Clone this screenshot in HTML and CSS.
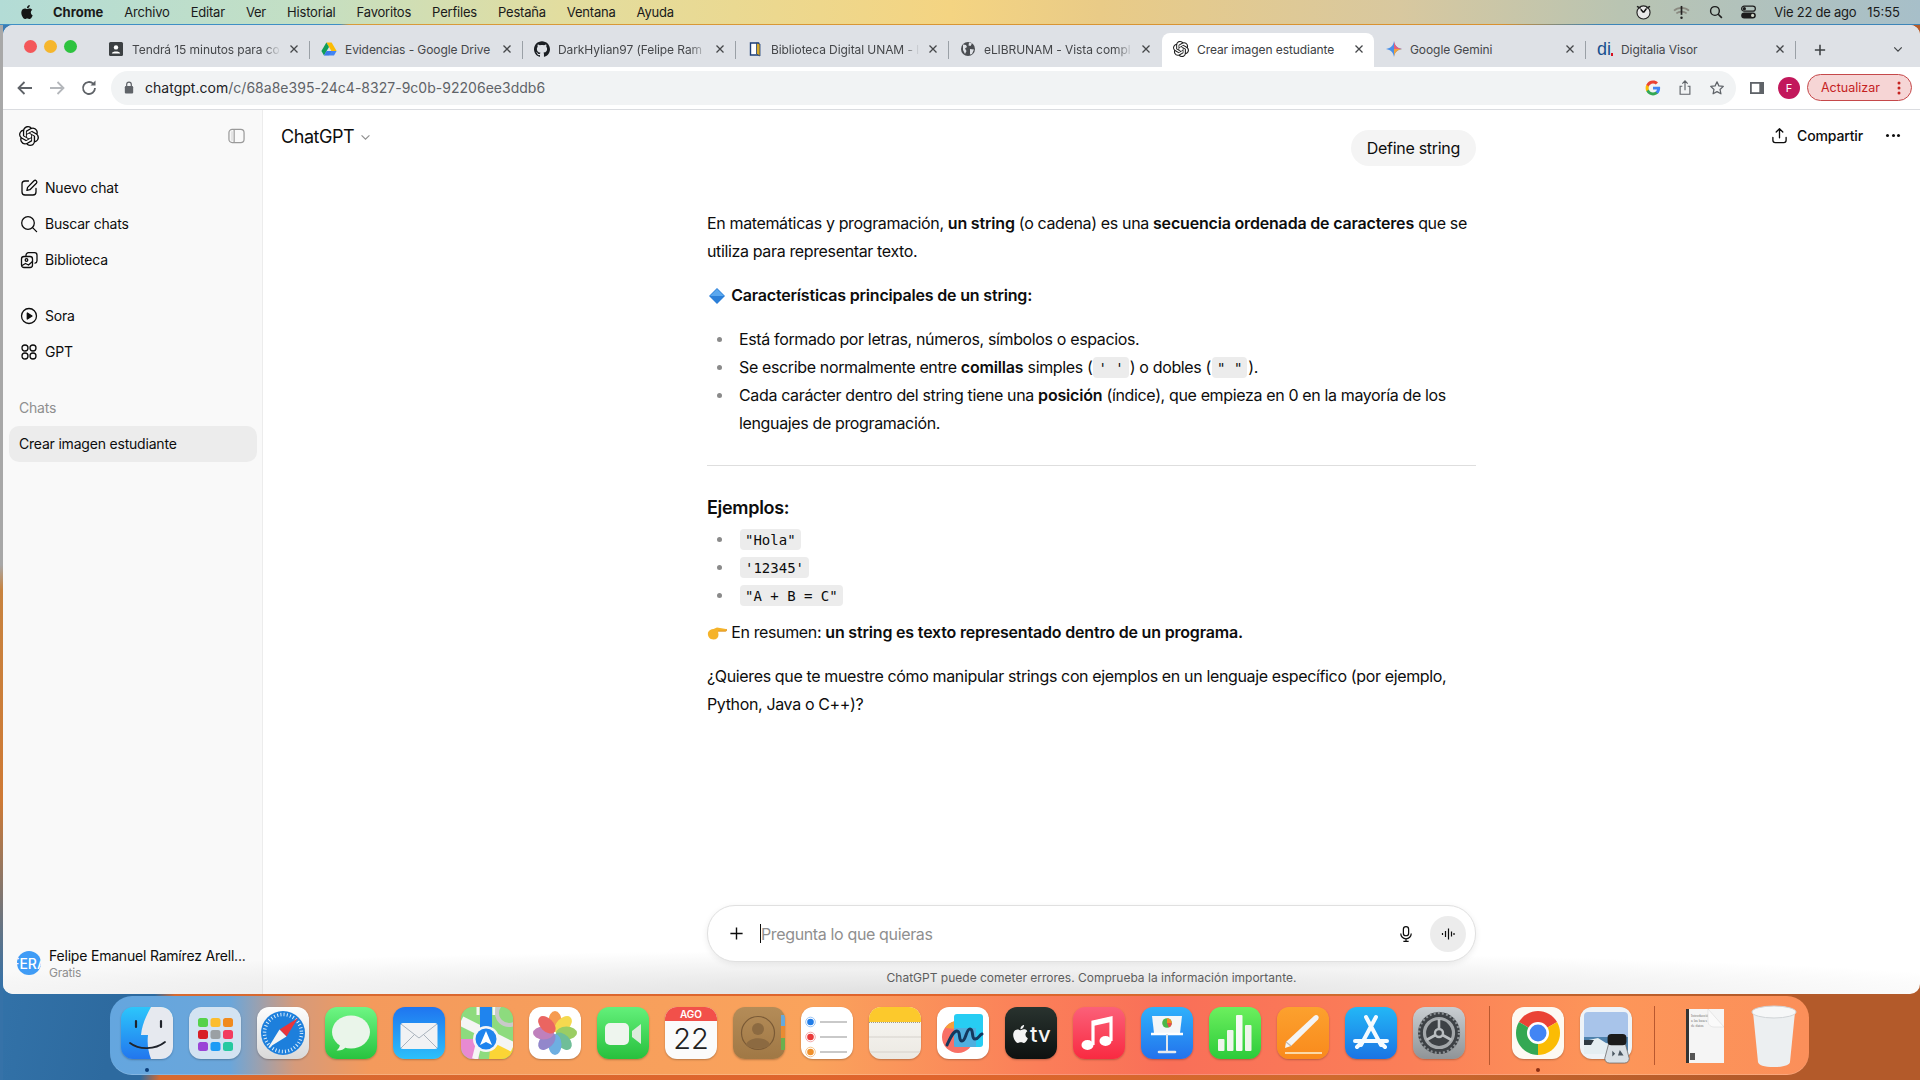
FILE: index.html
```html
<!DOCTYPE html>
<html lang="es">
<head>
<meta charset="utf-8">
<title>ChatGPT - Crear imagen estudiante</title>
<link rel="stylesheet" href="styles.css">
</head>
<body>
<div class="desktop">
  <header class="menubar">
    <svg class="apple" viewBox="0 0 24 24"><path d="M12.152 6.896c-.948 0-2.415-1.078-3.96-1.04-2.04.027-3.91 1.183-4.961 3.014-2.117 3.675-.546 9.103 1.519 12.09 1.013 1.454 2.208 3.09 3.792 3.039 1.52-.065 2.09-.987 3.935-.987 1.831 0 2.35.987 3.96.948 1.637-.026 2.676-1.48 3.676-2.948 1.156-1.688 1.636-3.325 1.662-3.415-.039-.013-3.182-1.221-3.22-4.857-.026-3.04 2.48-4.494 2.597-4.559-1.429-2.09-3.623-2.324-4.39-2.376-2-.156-3.675 1.09-4.61 1.09zM15.53 3.83c.843-1.012 1.4-2.427 1.245-3.83-1.207.052-2.662.805-3.532 1.818-.78.896-1.454 2.338-1.273 3.714 1.338.104 2.715-.688 3.559-1.701"/></svg>
    <nav class="menus">
      <b>Chrome</b><span>Archivo</span><span>Editar</span><span>Ver</span><span>Historial</span><span>Favoritos</span><span>Perfiles</span><span>Pestaña</span><span>Ventana</span><span>Ayuda</span>
    </nav>
    <div class="status">
      <svg class="st-owl" viewBox="0 0 16 16"><circle cx="8" cy="8.5" r="7" fill="#e8e8e8" stroke="#222" stroke-width="1.2"/><path d="M8 8.5L5 5M8 8.5l3-4" stroke="#111" stroke-width="1.6"/><path d="M1 2l4 2M15 2l-4 2" stroke="#222" stroke-width="1.6"/></svg>
      <svg class="st-wifi" viewBox="0 0 18 16"><path d="M1 6c4-4 12-4 16 0M3.5 9c3-2.6 8-2.6 11 0" fill="none" stroke="#8a8a80" stroke-width="1.8"/><path d="M9 1v9.5" stroke="#222" stroke-width="1.8"/><circle cx="9" cy="13.5" r="1.3" fill="#222"/></svg>
      <svg class="st-search" viewBox="0 0 16 16"><circle cx="6.8" cy="6.8" r="5" fill="none" stroke="#1c1c1c" stroke-width="1.6"/><path d="M10.5 10.5l4.2 4.2" stroke="#1c1c1c" stroke-width="1.8"/></svg>
      <svg class="st-cc" viewBox="0 0 16 14"><rect x=".7" y=".7" width="14.6" height="5.4" rx="2.7" fill="none" stroke="#1c1c1c" stroke-width="1.3"/><circle cx="3.6" cy="3.4" r="1.7" fill="#1c1c1c"/><rect x=".2" y="7.4" width="15.6" height="6.4" rx="3.2" fill="#1c1c1c"/><circle cx="12.4" cy="10.6" r="1.7" fill="#cfd6c8"/></svg>
      <span class="clock-date">Vie 22 de ago</span><span class="clock-time">15:55</span>
    </div>
  </header>

  <section class="window">
    <div class="tabstrip">
      <div class="lights"><i class="red"></i><i class="yellow"></i><i class="green"></i></div>
      <div class="tab"><svg class="fav" viewBox="0 0 16 16"><rect x="1" y="1" width="14" height="14" rx="1.5" fill="#3c4043"/><circle cx="8" cy="6.4" r="2.2" fill="#fff"/><path d="M3.8 12.4c.5-2.6 7.9-2.6 8.4 0z" fill="#fff"/></svg><span class="tab-title fade">Tendrá 15 minutos para co</span><svg class="x" viewBox="0 0 10 10"><path d="M1.5 1.5l7 7M8.5 1.5l-7 7"/></svg></div><i class="sep"></i>
      <div class="tab"><svg class="fav" viewBox="0 0 16 16"><path d="M5.4 1.5h5.2l5 8.6h-5.2z" fill="#fbbc04"/><path d="M5.4 1.5L.4 10.1l2.6 4.5 5-8.6z" fill="#0f9d58"/><path d="M3 14.6h10l2.6-4.5H5.6z" fill="#4285f4"/><path d="M3 14.6l2.6-4.5H10.6L8 14.6z" fill="#3367d6" opacity=".4"/></svg><span class="tab-title">Evidencias - Google Drive</span><svg class="x" viewBox="0 0 10 10"><path d="M1.5 1.5l7 7M8.5 1.5l-7 7"/></svg></div><i class="sep"></i>
      <div class="tab"><svg class="fav" viewBox="0 0 24 24"><path fill="#1b1f23" d="M12 .297c-6.63 0-12 5.373-12 12 0 5.303 3.438 9.8 8.205 11.385.6.113.82-.258.82-.577 0-.285-.01-1.04-.015-2.04-3.338.724-4.042-1.61-4.042-1.61C4.422 18.07 3.633 17.7 3.633 17.7c-1.087-.744.084-.729.084-.729 1.205.084 1.838 1.236 1.838 1.236 1.07 1.835 2.809 1.305 3.495.998.108-.776.417-1.305.76-1.605-2.665-.3-5.466-1.332-5.466-5.93 0-1.31.465-2.38 1.235-3.22-.135-.303-.54-1.523.105-3.176 0 0 1.005-.322 3.3 1.23.96-.267 1.98-.399 3-.405 1.02.006 2.04.138 3 .405 2.28-1.552 3.285-1.23 3.285-1.23.645 1.653.24 2.873.12 3.176.765.84 1.23 1.91 1.23 3.22 0 4.61-2.805 5.625-5.475 5.92.42.36.81 1.096.81 2.22 0 1.606-.015 2.896-.015 3.286 0 .315.21.69.825.57C20.565 22.092 24 17.592 24 12.297c0-6.627-5.373-12-12-12"/></svg><span class="tab-title fade">DarkHylian97 (Felipe Ram</span><svg class="x" viewBox="0 0 10 10"><path d="M1.5 1.5l7 7M8.5 1.5l-7 7"/></svg></div><i class="sep"></i>
      <div class="tab"><svg class="fav" viewBox="0 0 16 16"><path d="M3.500 2h8v12h-8z" fill="#fff" stroke="#1d3f78" stroke-width="1.400"/><path d="M9.500 2l3.500 1v12l-3.500-2z" fill="#d7a928" stroke="#1d3f78" stroke-width=".8"/></svg><span class="tab-title fade">Biblioteca Digital UNAM - I</span><svg class="x" viewBox="0 0 10 10"><path d="M1.5 1.5l7 7M8.5 1.5l-7 7"/></svg></div><i class="sep"></i>
      <div class="tab"><svg class="fav" viewBox="0 0 16 16"><circle cx="8" cy="8" r="7" fill="#4a4d51"/><path d="M3 3.5l3 .5 1 2-2 1.5 1.5 2.5L5 13 3 9zM9 1.5l3 1-1.5 2.5-2-.5zM10 8l4 .5-2 4.5-2 .5z" fill="#dee1e6"/></svg><span class="tab-title fade">eLIBRUNAM - Vista compl</span><svg class="x" viewBox="0 0 10 10"><path d="M1.5 1.5l7 7M8.5 1.5l-7 7"/></svg></div><i class="sep off"></i>
      <div class="tab active"><svg class="fav" viewBox="0 0 24 24"><path fill="#1f1f1f" d="M22.2819 9.8211a5.9847 5.9847 0 0 0-.5157-4.9108 6.0462 6.0462 0 0 0-6.5098-2.9A6.0651 6.0651 0 0 0 4.9807 4.1818a5.9847 5.9847 0 0 0-3.9977 2.9 6.0462 6.0462 0 0 0 .7427 7.0966 5.98 5.98 0 0 0 .511 4.9107 6.051 6.051 0 0 0 6.5146 2.9001A5.9847 5.9847 0 0 0 13.2599 24a6.0557 6.0557 0 0 0 5.7718-4.2058 5.9894 5.9894 0 0 0 3.9977-2.9001 6.0557 6.0557 0 0 0-.7475-7.0729zm-9.022 12.6081a4.4755 4.4755 0 0 1-2.8764-1.0408l.1419-.0804 4.7783-2.7582a.7948.7948 0 0 0 .3927-.6813v-6.7369l2.02 1.1686a.071.071 0 0 1 .038.052v5.5826a4.504 4.504 0 0 1-4.4945 4.4944zm-9.6607-4.1254a4.4708 4.4708 0 0 1-.5346-3.0137l.142.0852 4.783 2.7582a.7712.7712 0 0 0 .7806 0l5.8428-3.3685v2.3324a.0804.0804 0 0 1-.0332.0615L9.74 19.9502a4.4992 4.4992 0 0 1-6.1408-1.6464zM2.3408 7.8956a4.485 4.485 0 0 1 2.3655-1.9728V11.6a.7664.7664 0 0 0 .3879.6765l5.8144 3.3543-2.0201 1.1685a.0757.0757 0 0 1-.071 0l-4.8303-2.7865A4.504 4.504 0 0 1 2.3408 7.872zm16.5963 3.8558L13.1038 8.364 15.1192 7.2a.0757.0757 0 0 1 .071 0l4.8303 2.7913a4.4944 4.4944 0 0 1-.6765 8.1042v-5.6772a.79.79 0 0 0-.407-.667zm2.0107-3.0231l-.142-.0852-4.7735-2.7818a.7759.7759 0 0 0-.7854 0L9.409 9.2297V6.8974a.0662.0662 0 0 1 .0284-.0615l4.8303-2.7866a4.4992 4.4992 0 0 1 6.6802 4.66zM8.3065 12.863l-2.02-1.1638a.0804.0804 0 0 1-.038-.0567V6.0742a4.4992 4.4992 0 0 1 7.3757-3.4537l-.142.0805L8.704 5.459a.7948.7948 0 0 0-.3927.6813zm1.0976-2.3654l2.602-1.4998 2.6069 1.4998v2.9994l-2.5974 1.5-2.6067-1.5Z"/></svg><span class="tab-title">Crear imagen estudiante</span><svg class="x" viewBox="0 0 10 10"><path d="M1.5 1.5l7 7M8.5 1.5l-7 7"/></svg></div><i class="sep off"></i>
      <div class="tab w211"><svg class="fav" viewBox="0 0 16 16"><path d="M8 0c.6 4.500 3 7 8 8-5 1-7.400 3.500-8 8-.6-4.500-3-7-8-8 5-1 7.400-3.500 8-8z" fill="#4a90e8"/><path d="M8 0c.6 4.500 3 7 8 8H8z" fill="#e8607a"/><path d="M8 8h8c-5 1-7.400 3.500-8 8z" fill="#f2a33a"/></svg><span class="tab-title">Google Gemini</span><svg class="x" viewBox="0 0 10 10"><path d="M1.5 1.5l7 7M8.5 1.5l-7 7"/></svg></div><i class="sep"></i>
      <div class="tab w210"><span class="fav di">di<i></i></span><span class="tab-title">Digitalia Visor</span><svg class="x" viewBox="0 0 10 10"><path d="M1.5 1.5l7 7M8.500 1.500l-7 7"/></svg></div><i class="sep"></i>
      <svg class="newtab" viewBox="0 0 14 14"><path d="M7 1v12M1 7h12"/></svg>
      <svg class="tabmenu" viewBox="0 0 12 8"><path d="M1.500 1.500L6 6l4.500-4.500"/></svg>
    </div>

    <div class="toolbar">
      <svg class="nav-ic" viewBox="0 0 20 20"><path d="M17 10H4M9.500 4L3.500 10l6 6" fill="none" stroke="#5f6368" stroke-width="1.800"/></svg>
      <svg class="nav-ic" viewBox="0 0 20 20"><path d="M3 10h13M10.500 4l6 6-6 6" fill="none" stroke="#b4b7bb" stroke-width="1.800"/></svg>
      <svg class="nav-ic" viewBox="0 0 20 20"><path d="M16 10a6 6 0 1 1-1.800-4.300" fill="none" stroke="#5f6368" stroke-width="1.800"/><path d="M16.500 2.500v5h-5z" fill="#5f6368"/></svg>
      <div class="omnibox">
        <svg class="lock" viewBox="0 0 12 14"><rect x="1.500" y="5.500" width="9" height="8" rx="1.200" fill="#5f6368"/><path d="M3.500 6V3.800a2.500 2.500 0 0 1 5 0V6" fill="none" stroke="#5f6368" stroke-width="1.300"/></svg>
        <span class="url"><span class="host">chatgpt.com</span>/c/68a8e395-24c4-8327-9c0b-92206ee3ddb6</span>
        <svg class="omni-ic" viewBox="0 0 18 18"><path d="M17 9.200c0-.6 0-1.100-.1-1.700H9v3.300h4.500c-.2 1-.8 1.900-1.700 2.500v2.100h2.700c1.600-1.500 2.500-3.600 2.500-6.200z" fill="#4285f4"/><path d="M9 17.300c2.300 0 4.200-.8 5.500-2l-2.700-2.100c-.7.500-1.700.8-2.800.8-2.200 0-4-1.500-4.700-3.400H1.500v2.100C2.900 15.500 5.800 17.300 9 17.300z" fill="#34a853"/><path d="M4.300 10.600c-.3-1-.3-2.200 0-3.200V5.300H1.500c-1.100 2.300-1.100 5.100 0 7.400z" fill="#fbbc04"/><path d="M9 4c1.200 0 2.300.4 3.200 1.200l2.400-2.400C13.100 1.400 11.100.7 9 .7 5.800.7 2.900 2.500 1.500 5.300l2.800 2.100C5 5.500 6.800 4 9 4z" fill="#ea4335"/></svg>
        <svg class="omni-ic" viewBox="0 0 18 18"><path d="M6 7H3.500v9h11V7H12M9 11.500V1.500M6 4l3-3 3 3" fill="none" stroke="#5f6368" stroke-width="1.300"/></svg>
        <svg class="omni-ic" viewBox="0 0 18 18"><path d="M9 2l2.100 4.600 5 .6-3.700 3.400 1 4.900L9 13.100l-4.400 2.400 1-4.900L1.900 7.200l5-.6z" fill="none" stroke="#5f6368" stroke-width="1.400" stroke-linejoin="round"/></svg>
      </div>
      <svg class="side-ic" viewBox="0 0 14 12"><rect width="14" height="12" fill="#5f6368"/><rect x="1.800" y="1.800" width="7.500" height="8.400" fill="#fff"/></svg>
      <span class="profile">F</span>
      <div class="update"><span>Actualizar</span><svg viewBox="0 0 4 14"><circle cx="2" cy="2" r="1.500"/><circle cx="2" cy="7" r="1.500"/><circle cx="2" cy="12" r="1.500"/></svg></div>
    </div>

    <div class="app">
      <aside class="sidebar">
        <div class="side-top">
          <svg class="logo" viewBox="0 0 24 24"><path fill="#0d0d0d" d="M22.2819 9.8211a5.9847 5.9847 0 0 0-.5157-4.9108 6.0462 6.0462 0 0 0-6.5098-2.9A6.0651 6.0651 0 0 0 4.9807 4.1818a5.9847 5.9847 0 0 0-3.9977 2.9 6.0462 6.0462 0 0 0 .7427 7.0966 5.98 5.98 0 0 0 .511 4.9107 6.051 6.051 0 0 0 6.5146 2.9001A5.9847 5.9847 0 0 0 13.2599 24a6.0557 6.0557 0 0 0 5.7718-4.2058 5.9894 5.9894 0 0 0 3.9977-2.9001 6.0557 6.0557 0 0 0-.7475-7.0729zm-9.022 12.6081a4.4755 4.4755 0 0 1-2.8764-1.0408l.1419-.0804 4.7783-2.7582a.7948.7948 0 0 0 .3927-.6813v-6.7369l2.02 1.1686a.071.071 0 0 1 .038.052v5.5826a4.504 4.504 0 0 1-4.4945 4.4944zm-9.6607-4.1254a4.4708 4.4708 0 0 1-.5346-3.0137l.142.0852 4.783 2.7582a.7712.7712 0 0 0 .7806 0l5.8428-3.3685v2.3324a.0804.0804 0 0 1-.0332.0615L9.74 19.9502a4.4992 4.4992 0 0 1-6.1408-1.6464zM2.3408 7.8956a4.485 4.485 0 0 1 2.3655-1.9728V11.6a.7664.7664 0 0 0 .3879.6765l5.8144 3.3543-2.0201 1.1685a.0757.0757 0 0 1-.071 0l-4.8303-2.7865A4.504 4.504 0 0 1 2.3408 7.872zm16.5963 3.8558L13.1038 8.364 15.1192 7.2a.0757.0757 0 0 1 .071 0l4.8303 2.7913a4.4944 4.4944 0 0 1-.6765 8.1042v-5.6772a.79.79 0 0 0-.407-.667zm2.0107-3.0231l-.142-.0852-4.7735-2.7818a.7759.7759 0 0 0-.7854 0L9.409 9.2297V6.8974a.0662.0662 0 0 1 .0284-.0615l4.8303-2.7866a4.4992 4.4992 0 0 1 6.6802 4.66zM8.3065 12.863l-2.02-1.1638a.0804.0804 0 0 1-.038-.0567V6.0742a4.4992 4.4992 0 0 1 7.3757-3.4537l-.142.0805L8.704 5.459a.7948.7948 0 0 0-.3927.6813zm1.0976-2.3654l2.602-1.4998 2.6069 1.4998v2.9994l-2.5974 1.5-2.6067-1.5Z"/></svg>
          <svg class="toggle" viewBox="0 0 18 16"><rect x="1" y="1" width="16" height="14" rx="3.500" fill="none" stroke="#9a9a9a" stroke-width="1.300"/><path d="M6.500 1v14" stroke="#9a9a9a" stroke-width="1.300"/><path d="M3 3h2.500v10H3z" fill="#e4e4e4"/></svg>
        </div>
        <ul class="side-group first">
          <li class="side-item"><svg viewBox="0 0 20 20"><path d="M9.500 3H6a3 3 0 0 0-3 3v8a3 3 0 0 0 3 3h8a3 3 0 0 0 3-3v-3.500" /><path d="M15 2.800a1.700 1.700 0 0 1 2.400 2.400l-6.500 6.500-3 .7.700-3z"/></svg><span>Nuevo chat</span></li>
          <li class="side-item"><svg viewBox="0 0 20 20"><circle cx="9" cy="9" r="6.300"/><path d="M13.600 13.600l4 4"/></svg><span>Buscar chats</span></li>
          <li class="side-item"><svg viewBox="0 0 20 20"><rect x="2.500" y="6.500" width="11" height="11" rx="2.500"/><path d="M7 6.500V5.200a2.500 2.500 0 0 1 2.500-2.500h6a2.500 2.500 0 0 1 2.500 2.500v5.500a2.500 2.500 0 0 1-2 2.400"/><circle cx="7.500" cy="10" r="1.300"/><path d="M3 15.500l3.500-2 3 1.500 4-3.500"/></svg><span>Biblioteca</span></li>
        </ul>
        <ul class="side-group">
          <li class="side-item"><svg viewBox="0 0 20 20"><circle cx="10" cy="10" r="7.500"/><path d="M8.300 7v6l4.700-3z" fill="#0d0d0d"/></svg><span>Sora</span></li>
          <li class="side-item"><svg viewBox="0 0 20 20"><circle cx="6" cy="6" r="3"/><circle cx="14" cy="6" r="3"/><circle cx="6" cy="14" r="3"/><circle cx="14" cy="14" r="3"/></svg><span>GPT</span></li>
        </ul>
        <div class="side-label">Chats</div>
        <div class="side-chat">Crear imagen estudiante</div>
        <div class="side-user">
          <span class="user-avatar">FERA</span>
          <div class="user-meta"><span class="user-name">Felipe Emanuel Ramírez Arell...</span><span class="user-plan">Gratis</span></div>
        </div>
      </aside>

      <main class="main">
        <div class="chat-head">
          <div class="model">ChatGPT <svg viewBox="0 0 12 8"><path d="M1.500 1.500L6 6l4.500-4.500"/></svg></div>
          <div class="share">
            <svg viewBox="0 0 18 18"><path d="M9 11.500V2M5.500 5.300L9 1.800l3.500 3.500M2 11v3a2.500 2.500 0 0 0 2.500 2.500h9A2.500 2.500 0 0 0 16 14v-3"/></svg>
            <span>Compartir</span>
            <i class="more"><b></b><b></b><b></b></i>
          </div>
        </div>

        <article class="thread">
          <div class="user-msg-row"><div class="user-msg">Define string</div></div>
          <p>En matemáticas y programación, <strong>un string</strong> (o cadena) es una <strong>secuencia ordenada de caracteres</strong> que se utiliza para representar texto.</p>
          <p><svg class="emoji" viewBox="0 0 16 16"><path d="M8 0l8 8-8 8-8-8z" fill="#2b7fd8"/><path d="M8 1L1 8h14z" fill="#5aa7ee"/></svg> <strong>Características principales de un string:</strong></p>
          <ul class="bullets">
            <li><span>Está formado por letras, números, símbolos o espacios.</span></li>
            <li><span>Se escribe normalmente entre <strong>comillas</strong> simples (<code>' '</code>) o dobles (<code>" "</code>).</span></li>
            <li><span>Cada carácter dentro del string tiene una <strong>posición</strong> (índice), que empieza en 0 en la mayoría de los lenguajes de programación.</span></li>
          </ul>
          <hr>
          <h3>Ejemplos:</h3>
          <ul class="bullets tight">
            <li><span><code>"Hola"</code></span></li>
            <li><span><code>'12345'</code></span></li>
            <li><span><code>"A + B = C"</code></span></li>
          </ul>
          <p class="after-code"><svg class="emoji hand" viewBox="0 0 20 16"><path d="M1 7.500c1-2.500 3-3.200 5.500-3.500L10 2.500l9 1.500c1 .5 1 2-.3 2.200L11 6.200l.5 3.500c0 3-2 4.800-5 4.800-3.500 0-6.300-2.800-5.500-7z" fill="#f5b32a"/><path d="M11 6.200l7.700 0c1.300-.2 1.300-1.700.3-2.200" fill="none" stroke="#d98a18" stroke-width=".8"/></svg> En resumen: <strong>un string es texto representado dentro de un programa.</strong></p>
          <p>¿Quieres que te muestre cómo manipular strings con ejemplos en un lenguaje específico (por ejemplo, Python, Java o C++)?</p>
        </article>

        <div class="composer">
          <svg class="plus" viewBox="0 0 16 16"><path d="M8 1.500v13M1.500 8h13"/></svg>
          <div class="prompt"><i class="caret"></i><span>Pregunta lo que quieras</span></div>
          <svg class="mic" viewBox="0 0 16 20"><rect x="5" y="1.500" width="6" height="10.500" rx="3"/><path d="M2 9.500a6 6 0 0 0 12 0M8 15.500v3M5 18.500h6"/></svg>
          <span class="voice"><svg viewBox="0 0 14 14"><path d="M1.500 6v2M4.500 4v6M7.500 1.500v11M10.500 4.500v5M13 6v2"/></svg></span>
        </div>
        <div class="disclaimer">ChatGPT puede cometer errores. Comprueba la información importante.</div>
      </main>
    </div>
  </section>

  <footer class="dock">
    <div class="slot"><div class="tile finder"><svg viewBox="0 0 52 52"><path d="M30 0c-5 9-9 18-10 28h7c-1 8 0 16 3 24h22V0z" fill="#e6e9ef"/><path d="M15 14v6M40 14v6" stroke="#20242b" stroke-width="2.200" stroke-linecap="round"/><path d="M9 36c9 7 25 7 35-1" fill="none" stroke="#20242b" stroke-width="1.800" stroke-linecap="round"/></svg></div><i class="run-dot blue"></i></div>
    <div class="tile launch"><svg viewBox="0 0 52 52"><rect x="9" y="11" width="10" height="9" rx="2.500" fill="#55d24a"/><rect x="21.500" y="11" width="10" height="9" rx="2.500" fill="#fbbd2e"/><rect x="34" y="11" width="10" height="9" rx="2.500" fill="#f08a1d"/><rect x="9" y="23" width="10" height="9" rx="2.500" fill="#d81f26"/><rect x="21.500" y="23" width="10" height="9" rx="2.500" fill="#9aa0a4"/><rect x="34" y="23" width="10" height="9" rx="2.500" fill="#f23c5f"/><rect x="9" y="35" width="10" height="9" rx="2.500" fill="#9a45d6"/><rect x="21.500" y="35" width="10" height="9" rx="2.500" fill="#1c9bf5"/><rect x="34" y="35" width="10" height="9" rx="2.500" fill="#27c9a0"/></svg></div>
    <div class="tile safari"><svg viewBox="0 0 52 52"><circle cx="26" cy="26" r="22" fill="#1d7fdc"/><circle cx="26" cy="26" r="18.500" fill="none" stroke="#dbeefc" stroke-width="3.500" stroke-dasharray="1 2.230"/><path d="M41 11L22.500 22.500l7 7z" fill="#e8343c"/><path d="M11 41l18.500-11.500-7-7z" fill="#f4f4f4"/></svg></div>
    <div class="tile messages"><svg viewBox="0 0 52 52"><ellipse cx="26" cy="25" rx="19" ry="16.500" fill="#eaf5ea"/><path d="M15 37c0 3-1.500 5-3.500 6.500 4 .5 7-1 9-3z" fill="#eaf5ea"/></svg></div>
    <div class="tile mail"><svg viewBox="0 0 52 52"><rect x="7.500" y="16" width="37" height="26" rx="2.500" fill="#f1f2f4"/><path d="M8 17l18 14 18-14M8 41l13-13M44 41L31 28" fill="none" stroke="#aab3bd" stroke-width="1"/></svg></div>
    <div class="tile maps"><svg viewBox="0 0 52 52"><path d="M0 0h52v52H0z" fill="#8ddb7e"/><path d="M0 32h14l4 20H0z" fill="#e78ad2"/><path d="M28 52l2-18 22 6v12z" fill="#fbd535"/><path d="M0 14l52 26" stroke="#f5f5f5" stroke-width="10"/><path d="M14 52l6-24" stroke="#f5f5f5" stroke-width="6"/><path d="M19 0h12v26H19z" fill="#1f84ee"/><path d="M17 0v8M33 0v8" stroke="#f5f5f5" stroke-width="3"/><circle cx="48" cy="6" r="12" fill="none" stroke="#c9c9c9" stroke-width="4"/><circle cx="25" cy="32" r="13" fill="#f6f6f6"/><circle cx="25" cy="32" r="10.500" fill="#1f84ee"/><path d="M25 24l6 14-6-3-6 3z" fill="#fff"/></svg></div>
    <div class="tile photos"><svg viewBox="0 0 52 52"><g opacity=".88"><ellipse cx="26" cy="14.500" rx="6.500" ry="10.500" fill="#f58e3a"/><ellipse cx="26" cy="14.500" rx="6.500" ry="10.500" fill="#f4d437" transform="rotate(45 26 26)"/><ellipse cx="26" cy="14.500" rx="6.500" ry="10.500" fill="#8ec64e" transform="rotate(90 26 26)"/><ellipse cx="26" cy="14.500" rx="6.500" ry="10.500" fill="#5cb58a" transform="rotate(135 26 26)"/><ellipse cx="26" cy="14.500" rx="6.500" ry="10.500" fill="#5aa4dd" transform="rotate(180 26 26)"/><ellipse cx="26" cy="14.500" rx="6.500" ry="10.500" fill="#8377c4" transform="rotate(225 26 26)"/><ellipse cx="26" cy="14.500" rx="6.500" ry="10.500" fill="#b76fb3" transform="rotate(270 26 26)"/><ellipse cx="26" cy="14.500" rx="6.500" ry="10.500" fill="#e8504c" transform="rotate(315 26 26)"/></g></svg></div>
    <div class="tile facetime"><svg viewBox="0 0 52 52"><rect x="8" y="16" width="24" height="22" rx="5" fill="#eef5ee"/><path d="M35 24l9-7v20l-9-7z" fill="#dcebdc"/></svg></div>
    <div class="tile calendar"><span class="cal-month">AGO</span><span class="cal-day">22</span></div>
    <div class="tile contacts"><svg viewBox="0 0 52 52"><path d="M48 8h4v11h-4z" fill="#66a9dd"/><path d="M48 19h4v12h-4z" fill="#e98b33"/><path d="M48 31h4v12h-4z" fill="#6cb04e"/><circle cx="25" cy="26" r="16.500" fill="none" stroke="#7a5a36" stroke-width="1.200"/><circle cx="25" cy="22" r="6" fill="#8c6a41"/><path d="M13 38c2-9 22-9 24 0-6 5-18 5-24 0z" fill="#8c6a41"/></svg></div>
    <div class="tile reminders"><svg viewBox="0 0 52 52"><circle cx="9.500" cy="15" r="4.800" fill="none" stroke="#9cc4f3"/><circle cx="9.500" cy="15" r="3.300" fill="#1f7ce8"/><circle cx="9.500" cy="30" r="4.800" fill="none" stroke="#f3aaaa"/><circle cx="9.500" cy="30" r="3.300" fill="#ea3a3a"/><circle cx="9.500" cy="45" r="4.800" fill="none" stroke="#f2c48f"/><circle cx="9.500" cy="45" r="3.300" fill="#f0902a"/><path d="M19 15h27M19 30h27M19 45h27" stroke="#c9c9c9" stroke-width="2"/></svg></div>
    <div class="tile notes"><svg viewBox="0 0 52 52"><rect width="52" height="15" fill="#fcc92c"/><path d="M0 15.500h52" stroke="#9b9b8a" stroke-dasharray="1 1" stroke-width="1.200"/><path d="M0 30h52M0 45h52" stroke="#d5d2cb" stroke-width="1.200"/></svg></div>
    <div class="tile freeform"><svg viewBox="0 0 52 52"><circle cx="21" cy="30" r="16" fill="#f87066"/><path d="M8 21a16 16 0 0 1 10-7l2 8z" fill="#f5a03c"/><rect x="17" y="7" width="29" height="33" rx="3" fill="#27cdf3"/><path d="M17 21h22v19H17z" fill="#5da4d8" opacity=".75"/><path d="M10 38c3-6 6-14 10-14 4 0 1 10 5 10s4-12 8-12 1 10 5 10 4-4 7-5" fill="none" stroke="#14385e" stroke-width="3" stroke-linecap="round"/></svg></div>
    <div class="tile tv"><svg viewBox="0 0 52 52"><g transform="translate(6.500 18) scale(.75)" fill="#f4f4f4"><path d="M12.152 6.896c-.948 0-2.415-1.078-3.960-1.040-2.040.027-3.910 1.183-4.961 3.014-2.117 3.675-.546 9.103 1.519 12.090 1.013 1.454 2.208 3.090 3.792 3.039 1.520-.065 2.090-.987 3.935-.987 1.831 0 2.350.987 3.960.948 1.637-.026 2.676-1.480 3.676-2.948 1.156-1.688 1.636-3.325 1.662-3.415-.039-.013-3.182-1.221-3.220-4.857-.026-3.040 2.480-4.494 2.597-4.559-1.429-2.090-3.623-2.324-4.390-2.376-2-.156-3.675 1.090-4.610 1.090zM15.530 3.830c.843-1.012 1.400-2.427 1.245-3.830-1.207.052-2.662.805-3.532 1.818-.780.896-1.454 2.338-1.273 3.714 1.338.104 2.715-.688 3.559-1.701"/></g><text x="25" y="35" class="tv-text">tv</text></svg></div>
    <div class="tile music"><svg viewBox="0 0 52 52"><path d="M20 38V15l18-4v23" fill="none" stroke="#fff" stroke-width="3.200"/><path d="M20 14l18-4v5l-18 4z" fill="#fff"/><ellipse cx="14.500" cy="38" rx="6" ry="5" fill="#fff"/><ellipse cx="32.500" cy="34" rx="6" ry="5" fill="#fff"/></svg></div>
    <div class="tile keynote"><svg viewBox="0 0 52 52"><path d="M11 9h30l-2 17H13z" fill="#f4f6f8"/><path d="M10 27h32" stroke="#fff" stroke-width="2.500"/><path d="M26 27v17" stroke="#dfe7ee" stroke-width="2"/><path d="M18 45h16" stroke="#e6eaee" stroke-width="2.600" stroke-linecap="round"/><circle cx="26" cy="16" r="4.800" fill="#4cb848"/><path d="M26 16v-4.800a4.800 4.800 0 0 1 4.800 4.800z" fill="#f08a24"/><path d="M26 16h4.800a4.800 4.800 0 0 1-3 4.500z" fill="#e94c4c"/></svg></div>
    <div class="tile numbers"><svg viewBox="0 0 52 52"><rect x="9" y="32" width="6.500" height="12" rx="1" fill="#eef5ec"/><rect x="18" y="23" width="6.500" height="21" rx="1" fill="#eef5ec"/><rect x="27" y="8" width="6.500" height="36" rx="1" fill="#f6faf5"/><rect x="36" y="18" width="6.500" height="26" rx="1" fill="#eef5ec"/></svg></div>
    <div class="tile pages"><svg viewBox="0 0 52 52"><path d="M9 35L37 9c3-2.500 6 .5 4 3.500L14 39l-6 2z" fill="#f4f4f4"/><path d="M9 35l5 4" stroke="#b9b9b9" stroke-width="1.200"/><path d="M8 46h37" stroke="#fbd9a8" stroke-width="2.200"/></svg></div>
    <div class="tile appstore"><svg viewBox="0 0 52 52"><path d="M31 10L16 38M21 10l15 28M10 34h32M12 40l3-3M40 40l-3-3" fill="none" stroke="#f5fbff" stroke-width="4" stroke-linecap="round"/></svg></div>
    <div class="tile settings"><svg viewBox="0 0 52 52"><circle cx="26" cy="26" r="21" fill="#3d4145"/><circle cx="26" cy="26" r="20" fill="none" stroke="#8a8f93" stroke-width="2.400" stroke-dasharray="2 2.200"/><circle cx="26" cy="26" r="14.500" fill="none" stroke="#a3a7aa" stroke-width="3.200"/><circle cx="26" cy="26" r="4" fill="none" stroke="#b9bdc0" stroke-width="2.400"/><path d="M26 22V12M22.500 28l-9 5M29.500 28l9 5" stroke="#b9bdc0" stroke-width="2.600"/></svg></div>
    <i class="dock-sep"></i>
    <div class="slot"><div class="tile chrome"><svg viewBox="0 0 52 52"><path d="M26 26L6.950 15A22 22 0 0 1 45.050 15z" fill="#ea4335"/><path d="M26 26l19.050-11A22 22 0 0 1 26 48z" fill="#fbbc04"/><path d="M26 26v22A22 22 0 0 1 6.950 15z" fill="#34a853"/><circle cx="26" cy="26" r="11" fill="#fff"/><circle cx="26" cy="26" r="8.500" fill="#4285f4"/></svg></div><i class="run-dot"></i></div>
    <div class="slot"><div class="tile preview"><svg viewBox="0 0 52 52"><rect x="4" y="5" width="44" height="42" rx="4" fill="#a8c4ea"/><path d="M4 30h44v17H4z" fill="#4f82ad"/><path d="M4 34l14-3 8 5 10 2 12 6v3H4z" fill="#e4eef2"/><path d="M4 33h10l-3 5H4z" fill="#2f3a42"/></svg></div><svg class="loupe" viewBox="0 0 30 34"><path d="M6 13h18l4 15c0 3-2 5-5 5H7c-3 0-5-2-5-5z" fill="#d9e0e5" stroke="#666" stroke-width=".8"/><rect x="5" y="2" width="20" height="12" rx="4" fill="#1b1b1b"/><path d="M10 20l3 3-3 3zM18 19l4 6h-6z" fill="#4a5660"/></svg></div>
    <i class="dock-sep second"></i>
    <div class="tile-doc"><svg viewBox="0 0 40 54"><rect width="38" height="54" fill="#f5f5f5"/><rect width="3" height="54" fill="#333"/><text x="5" y="8" class="doc-text">Introducción</text><text x="5" y="13" class="doc-text">a las bases</text><text x="5" y="18" class="doc-text">de datos</text><path d="M22 0v12c0 4 3 6 6 6h10z" fill="#fafafa" stroke="#d4d4d4" stroke-width=".5"/><rect x="4" y="44" width="5" height="7" fill="#555"/></svg></div>
    <div class="tile-trash"><svg viewBox="0 0 46 62"><path d="M2 7l5 50c.3 3 6 5 16 5s15.700-2 16-5l5-50z" fill="#eceff1"/><ellipse cx="23" cy="7" rx="22" ry="6" fill="#f6f7f8" stroke="#cfd3d6"/></svg></div>
  </footer>
</div>
</body>
</html>
```
FILE: styles.css
```css
*{box-sizing:border-box}
html,body{margin:0;height:100%}
body{font-family:Inter,"Noto Sans","Liberation Sans",sans-serif;color:#0d0d0d;overflow:hidden}
ul{list-style:none;margin:0;padding:0}
svg{display:block;flex:none}

.desktop{
  width:1920px;height:1080px;display:flex;flex-direction:column;
  background:
    linear-gradient(to bottom,#a8a8a8 0,#a8a8a8 565px,#c8833f 590px,#cf7a35 800px,#3672a8 985px) 0 0/3px 100% no-repeat,
    linear-gradient(100deg,#3a7db5 0,#2d6a9f 290px,#2d6a9f 325px,#d76a30 345px,#e0642c 1100px,#cf6a2e 1500px,#b35a2a 1920px);
}

/* menu bar */
.menubar{
  height:25px;flex:none;display:flex;align-items:center;padding:0 20px;font-size:13px;color:#1a1a1a;
  background:linear-gradient(90deg,#b3dcd6 0,#c3dfc4 300px,#e2dd9f 560px,#f4d482 950px,#e9cb87 1100px,#d8c89f 1400px,#b9c4b2 1620px,#a7bfc9 1920px);
  border-bottom:1px solid;
  border-image:linear-gradient(90deg,#3f8fc4 0,#3f8fc4 340px,#d89b3a 350px,#d9912f 1500px,#3d85b8 1600px,#3d85b8 1920px) 1;
}
.apple{width:14px;height:16px;fill:#161616}
.menus{display:flex;gap:21px;margin-left:19px;align-items:center}
.menus span{letter-spacing:-.2px}
.menus b{font-weight:700}
.status{margin-left:auto;display:flex;align-items:center}
.st-owl{width:15px;height:16px;margin-right:22px}
.st-wifi{width:17px;height:15px;margin-right:19px}
.st-search{width:14px;height:14px;margin-right:18px}
.st-cc{width:15px;height:14px;margin-right:18px}
.clock-date{margin-right:11px;letter-spacing:-.25px}

/* window */
.window{flex:1;min-height:0;margin-left:3px;background:#fff;border-radius:10px;overflow:hidden;display:flex;flex-direction:column;position:relative}
.tabstrip{height:42px;flex:none;background:#dee1e6;display:flex;align-items:flex-end;padding-left:94px;position:relative}
.lights{position:absolute;left:21px;top:15px;display:flex;gap:7px}
.lights i{width:13px;height:13px;border-radius:50%}
.lights .red{background:#f4575a}
.lights .yellow{background:#f5b62c}
.lights .green{background:#2dc33f}
.tab{width:212px;height:34px;flex:none;display:flex;align-items:center;padding:0 10px 2px 11px;font-size:12px;letter-spacing:-.08px;color:#45474a;gap:8px}
.tab.w211{width:210px}
.tab.w210{width:209px}
.tab.active{background:#fff;border-radius:8px 8px 0 0;color:#3c4043}
.fav{width:16px;height:16px;flex:none}
.di{font:400 18px/16px "Liberation Sans",sans-serif;letter-spacing:0;color:#17508f;display:flex;align-items:flex-end;gap:0}
.di i{width:3px;height:3px;background:#d8101f;margin-bottom:1px}
.tab-title{flex:1;min-width:0;white-space:nowrap}
.tab-title.fade{-webkit-mask-image:linear-gradient(90deg,#000 88%,transparent);mask-image:linear-gradient(90deg,#000 88%,transparent)}
.x{width:10px;height:10px;flex:none;fill:none;stroke:#45474a;stroke-width:1.300}
.sep{width:1px;height:18px;background:#9aa0a6;flex:none;margin-bottom:8px}
.sep.off{background:transparent}
.newtab{width:12px;height:12px;margin:0 0 11px 18px;fill:none;stroke:#3c4043;stroke-width:1.800}
.tabmenu{width:10px;height:7px;margin:0 17px 14px auto;fill:none;stroke:#45474a;stroke-width:1.500}

.toolbar{height:43px;flex:none;display:flex;align-items:center;padding:0 8px 1px 12px;gap:12px;border-bottom:1px solid #dadce0;background:#fff}
.nav-ic{width:20px;height:20px}
.omnibox{flex:1;height:34px;border-radius:17px;background:#f1f3f4;display:flex;align-items:center;padding:0 11px 0 12px}
.lock{width:12px;height:13px;margin-right:10px}
.url{flex:1;font-size:14px;color:#5f6368;white-space:nowrap;letter-spacing:.02px}
.host{color:#202124}
.omni-ic{width:16px;height:16px;margin-left:16px}
.side-ic{width:14px;height:12px;margin-left:2px}
.profile{width:22px;height:22px;border-radius:50%;background:#c2185b;color:#fff;font-size:11px;display:flex;align-items:center;justify-content:center;flex:none;margin-left:2px}
.update{width:105px;height:27px;border:1px solid #c5484a;border-radius:14px;background:#f6d5d5;color:#c5221f;font-size:12.500px;display:flex;align-items:center;justify-content:space-between;padding:0 10px 0 13px;margin-left:-5px;flex:none}
.update svg{width:4px;height:14px;fill:#c5221f}

/* app */
.app{flex:1;min-height:0;display:flex;position:relative}
.app::after{content:"";position:absolute;left:0;right:0;bottom:0;height:44px;pointer-events:none;
  background:radial-gradient(ellipse 1100px 44px at 50% 100%,rgba(120,120,120,.24),rgba(120,120,120,0))}
.sidebar{width:260px;flex:none;background:#f9f9f9;border-right:1px solid #ececec;display:flex;flex-direction:column;font-size:14px;letter-spacing:-.2px}
.side-top{height:52px;flex:none;display:flex;align-items:center;justify-content:space-between;padding:0 17px 0 16px}
.logo{width:20px;height:20px}
.toggle{width:17px;height:16px}
.side-group{margin-top:20px}
.side-group.first{margin-top:8px}
.side-item{height:36px;display:flex;align-items:center;gap:6px;padding:0 16px}
.side-item span{padding-bottom:2px}
.side-item svg{width:20px;height:20px;fill:none;stroke:#0d0d0d;stroke-width:1.300;stroke-linecap:round;stroke-linejoin:round}
.side-label{height:36px;margin-top:20px;padding:0 16px 2px;display:flex;align-items:center;color:#8f8f8f}
.side-chat{height:36px;margin:0 5px 0 6px;padding:0 10px 2px;border-radius:10px;background:#ececec;display:flex;align-items:center;flex:none}
.side-user{margin-top:auto;margin-bottom:13px;height:36px;display:flex;align-items:center;gap:8px;padding:0 14px}
.user-avatar{width:24px;height:24px;border-radius:50%;background:#3f9cf6;color:#fff;font-size:14px;font-weight:500;letter-spacing:0;overflow:hidden;display:flex;align-items:center;justify-content:center;flex:none;white-space:nowrap}
.user-meta{min-width:0;flex:1;display:flex;flex-direction:column}
.user-name{font-size:14px;line-height:18px;white-space:nowrap;letter-spacing:-.2px}
.user-plan{font-size:12px;line-height:15px;color:#8f8f8f}

.main{flex:1;min-width:0;display:flex;flex-direction:column;font-size:16px;letter-spacing:-.36px}
.chat-head{height:52px;flex:none;display:flex;align-items:center;justify-content:space-between;padding:0 20px 0 18px}
.model{display:flex;align-items:center;gap:6px;font-size:18px;color:#0d0d0d;letter-spacing:-.45px}
.model svg{width:11px;height:7px;margin-top:2px;fill:none;stroke:#8f8f8f;stroke-width:1.300}
.share{display:flex;align-items:center;font-size:14px;font-weight:500;letter-spacing:-.15px;padding-bottom:2px}
.share svg{width:17px;height:17px;margin-right:9px;fill:none;stroke:#0d0d0d;stroke-width:1.400;stroke-linecap:round;stroke-linejoin:round}
.more{display:flex;gap:2.500px;margin-left:23px}
.more b{width:3px;height:3px;border-radius:50%;background:#0d0d0d}
.thread{width:769px;flex:1;min-height:0;margin:-32px auto 0;line-height:28px;position:relative;z-index:1}
.user-msg-row{display:flex;justify-content:flex-end;margin-bottom:43px}
.user-msg{height:36px;padding:0 16px;border-radius:18px;background:#f4f4f4;display:flex;align-items:center;letter-spacing:-.3px}
.thread p{margin:0 0 16px}
.thread strong{font-weight:600;letter-spacing:-.18px}
.emoji{display:inline-block;width:16px;height:16px;vertical-align:-3px;margin:0 2px 0 2px}
.emoji.hand{width:20px;margin:0}
.bullets{margin-bottom:28px}
.bullets li{display:flex}
.bullets li::before{content:"";flex:none;width:5px;height:5px;border-radius:50%;background:#8a8a8a;margin:12px 17px 0 10px}
.bullets.tight{margin-bottom:9px}
code{font:14px "DejaVu Sans Mono",monospace;letter-spacing:0;background:#ececec;border-radius:4px;padding:2.500px 5px;margin:0 1px;position:relative;top:-1px}
hr{border:0;border-top:1px solid #dedede;margin:0 0 28px}
h3{font-size:18px;font-weight:600;line-height:28px;margin:0 0 3px;letter-spacing:-.3px}
.composer{width:769px;height:57px;flex:none;margin:0 auto;border:1px solid #e0e0e0;border-radius:28px;box-shadow:0 2px 6px rgba(0,0,0,.08);background:#fff;display:flex;align-items:center;padding:0 9px 0 21px;position:relative;z-index:1}
.plus{width:15px;height:15px;fill:none;stroke:#0d0d0d;stroke-width:1.500}
.prompt{flex:1;display:flex;align-items:center;margin-left:16px;color:#8f8f8f}
.caret{width:1px;height:19px;background:#0d0d0d}
.mic{width:14px;height:18px;fill:none;stroke:#0d0d0d;stroke-width:1.400;margin-right:17px}
.voice{width:36px;height:36px;border-radius:50%;background:#ececec;display:flex;align-items:center;justify-content:center;flex:none}
.voice svg{width:14px;height:14px;fill:none;stroke:#0d0d0d;stroke-width:1.200}
.disclaimer{height:32px;flex:none;display:flex;align-items:center;justify-content:center;font-size:12px;letter-spacing:0;color:#5d5d5d;position:relative;z-index:1;padding-bottom:2px}

/* dock */
.dock{
  width:1699px;height:79px;flex:none;margin:2px 0 5px 110px;border-radius:22px;display:flex;align-items:flex-start;padding:11px 0 0 11px;gap:16px;
  background:linear-gradient(90deg,#64a6df 0,#6ba6da 120px,#d69a7a 185px,#f49a5c 260px,#faa35c 700px,#fb7e59 930px,#f96f58 1060px,#fb7f58 1300px,#fd9659 1500px,#fb8f5a 1699px);
  border-bottom:1px solid rgba(255,255,255,.2);
}
.slot{width:52px;height:52px;flex:none;position:relative}
.tile{width:52px;height:52px;flex:none;border-radius:12px;overflow:hidden;box-shadow:0 1px 2px rgba(0,0,0,.25);position:relative}
.tile svg{width:52px;height:52px}
.finder{background:linear-gradient(#2cc6fb,#2276ee)}
.launch{background:#d3e3f2}
.safari{background:linear-gradient(#fdfdfd,#d9d9d9)}
.messages{background:linear-gradient(#6ef684,#28c33f)}
.mail{background:linear-gradient(#1f75f0,#2cc0fa)}
.maps{background:#8ddb7e}
.photos{background:#fff}
.facetime{background:linear-gradient(#63f07a,#27c03d)}
.calendar{background:#fbfbfb;display:flex;flex-direction:column;align-items:center}
.cal-month{width:100%;height:14px;background:#f2504a;color:#fff;font-size:10px;font-weight:600;line-height:14px;text-align:center}
.cal-day{font-size:29px;font-weight:300;line-height:36px;color:#222}
.contacts{background:linear-gradient(#b48c58,#a07845)}
.reminders{background:#fff}
.notes{background:linear-gradient(#f8f7f3,#ece9e3)}
.freeform{background:#fff}
.tv{background:linear-gradient(#29332f,#0d1110)}
.tv-text{font:500 22px Inter,sans-serif;fill:#f4f4f4}
.music{background:linear-gradient(#fb6079,#f92a41)}
.keynote{background:linear-gradient(#2fb1fb,#2372ec)}
.numbers{background:linear-gradient(#6cef5e,#2ccb3a)}
.pages{background:linear-gradient(#fca12e,#f98a1c)}
.appstore{background:linear-gradient(#23b7f6,#1a74e4)}
.settings{background:linear-gradient(#c9ced2,#8f9497)}
.chrome{background:#fdf9f2}
.run-dot{position:absolute;left:24px;top:61px;width:4px;height:4px;border-radius:50%;background:#8c2f14}
.run-dot.blue{background:#0b3d78}
.dock-sep{width:1px;height:59px;background:#b9582f;flex:none;margin:-1px 6px 0 8px}
.dock-sep.second{margin:-1px 15px 0 6px}
.preview{background:#eef3f7}
.loupe{position:absolute;left:22px;top:25px;width:30px;height:32px}
.tile-doc{width:40px;height:54px;flex:none;margin-top:2px}
.tile-doc svg{width:40px;height:54px}
.doc-text{font:3.800px "Liberation Serif",serif;fill:#777}
.tile-trash{width:46px;height:62px;flex:none;margin-top:-2px;margin-left:9px}
.tile-trash svg{width:46px;height:62px}
```
